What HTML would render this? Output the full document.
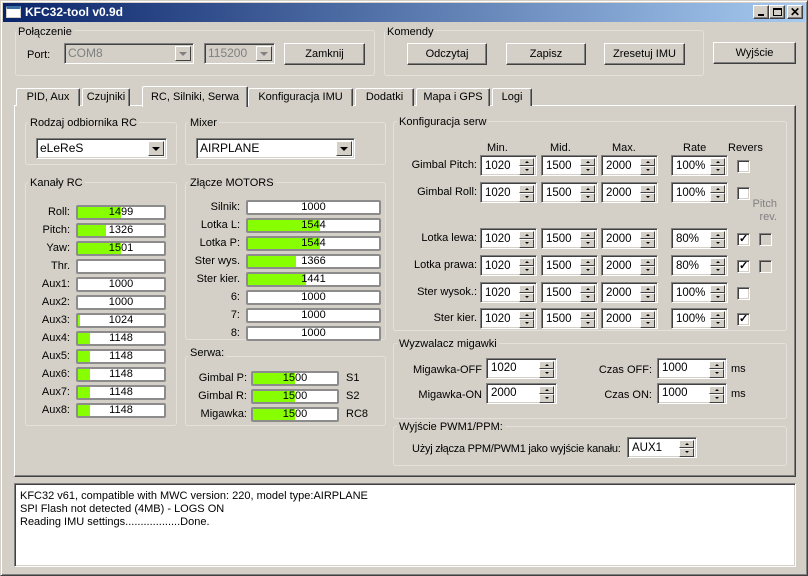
<!DOCTYPE html>
<html><head><meta charset="utf-8"><style>
*{box-sizing:border-box;margin:0;padding:0}
body{width:808px;height:576px;background:#d4d0c8;font:11px "Liberation Sans",sans-serif;color:#000;position:relative;overflow:hidden}
.a{position:absolute}
.win{left:0;top:0;width:808px;height:576px;border:1px solid;border-color:#d4d0c8 #404040 #404040 #d4d0c8;box-shadow:inset 1px 1px #fff,inset -1px -1px #808080}
.title{left:3px;top:3px;width:802px;height:19px;background:linear-gradient(90deg,#0a246a,#a6caf0);color:#fff;font-weight:bold;font-size:12px;line-height:19px;padding-left:22px}
.tb{top:5px;width:16px;height:14px;background:#d4d0c8;border:1px solid;border-color:#fff #404040 #404040 #fff;box-shadow:inset -1px -1px #808080}
.btn{background:#d4d0c8;border:1px solid;border-color:#fff #404040 #404040 #fff;box-shadow:inset -1px -1px #808080;text-align:center;line-height:20px;height:22px}
.sunk{background:#fff;border:1px solid;border-color:#808080 #fff #fff #808080;box-shadow:inset 1px 1px #404040,inset -1px -1px #d4d0c8}
.grp{border:1px solid #e4e1da;border-radius:3px}
.gl{background:#d4d0c8;padding:0 2px}
.tab{top:88px;height:18px;border:1px solid;border-bottom:none;border-color:#fff #404040 #404040 #fff;border-radius:2px 2px 0 0;text-align:center;line-height:16px;background:#d4d0c8;box-shadow:inset -1px 0 #808080}
.panel{left:14px;top:105px;width:782px;height:372px;border:1px solid;border-color:#fff #404040 #404040 #fff;box-shadow:inset -1px -1px #808080}
.bar{height:15px;border:2px solid #8c8c8c;border-radius:2px;background:#fff;text-align:center;line-height:11px;overflow:hidden}
.bar b{position:absolute;left:0;top:0;bottom:0;background:#88ff00;font-weight:normal}
.bar span{position:relative}
.lb{text-align:right;line-height:15px}
.sp{height:21px;padding-left:4px;line-height:20px;font-size:11.5px}
.u,.d{position:absolute;right:2px;width:15px;height:8px;background:#d4d0c8;border:1px solid;border-color:#fff #404040 #404040 #fff}
.u{top:2px}.d{top:10px;height:9px}
.u:after,.d:after{content:"";position:absolute;left:5px;top:2px;border:2px solid transparent}
.u:after{border-bottom-color:#000;top:0}
.d:after{border-top-color:#000;top:2px}
.cb{width:13px;height:13px}
.ck{font-size:11px;line-height:10px;padding-left:1px;font-weight:bold}
.combo{height:21px;padding-left:3px;line-height:19px;font-size:12px}
.dd{position:absolute;right:2px;top:2px;width:16px;height:15px;background:#d4d0c8;border:1px solid;border-color:#fff #404040 #404040 #fff}
.dd:after{content:"";position:absolute;left:3px;top:5px;border:4px solid transparent;border-top-color:#000;border-bottom:none}
.dis{color:#808080;background:#d4d0c8}
.dis .dd:after{border-top-color:#808080}
</style></head><body>
<div class="a win"></div>
<div class="a title">KFC32-tool v0.9d</div>
<div class="a" style="left:6px;top:6px;width:15px;height:12px;background:#fff;border:1px solid #d4d0c8;border-top:3px solid #3a6ea5"></div>
<div class="a tb" style="left:753px"><div class="a" style="left:4px;top:8px;width:6px;height:2px;background:#000"></div></div>
<div class="a tb" style="left:769px"><div class="a" style="left:3px;top:2px;width:9px;height:8px;border:1px solid #000;border-top-width:2px"></div></div>
<div class="a tb" style="left:787px;font:bold 12px 'Liberation Sans';line-height:12px;text-align:center">✕</div>

<div class="a grp" style="left:15px;top:30px;width:360px;height:46px"></div>
<div class="a gl" style="left:16px;top:26px">Połączenie</div>
<div class="a" style="left:27px;top:49px">Port:</div>
<div class="a sunk combo dis" style="left:64px;top:43px;width:130px">COM8<i class="dd"></i></div>
<div class="a sunk combo dis" style="left:204px;top:43px;width:71px">115200<i class="dd"></i></div>
<div class="a btn" style="left:284px;top:43px;width:81px">Zamknij</div>

<div class="a grp" style="left:384px;top:30px;width:320px;height:46px"></div>
<div class="a gl" style="left:385px;top:26px">Komendy</div>
<div class="a btn" style="left:407px;top:43px;width:80px">Odczytaj</div>
<div class="a btn" style="left:506px;top:43px;width:80px">Zapisz</div>
<div class="a btn" style="left:604px;top:43px;width:81px">Zresetuj IMU</div>
<div class="a btn" style="left:713px;top:42px;width:83px">Wyjście</div>

<div class="a panel"></div>
<div class="a tab" style="left:16px;width:64px">PID, Aux</div>
<div class="a tab" style="left:82px;width:48px">Czujniki</div>
<div class="a tab" style="left:248px;width:105px">Konfiguracja IMU</div>
<div class="a tab" style="left:355px;width:59px">Dodatki</div>
<div class="a tab" style="left:416px;width:74px">Mapa i GPS</div>
<div class="a tab" style="left:492px;width:40px">Logi</div>
<div class="a tab" style="left:142px;top:86px;width:106px;height:21px;line-height:20px">RC, Silniki, Serwa</div>

<div class="a grp" style="left:25px;top:122px;width:152px;height:43px"></div>
<div class="a gl" style="left:28px;top:117px">Rodzaj odbiornika RC</div>
<div class="a sunk combo" style="left:36px;top:138px;width:131px">eLeReS<i class="dd"></i></div>
<div class="a grp" style="left:185px;top:122px;width:201px;height:43px"></div>
<div class="a gl" style="left:188px;top:117px">Mixer</div>
<div class="a sunk combo" style="left:196px;top:138px;width:159px">AIRPLANE<i class="dd"></i></div>

<div class="a grp" style="left:25px;top:182px;width:152px;height:244px"></div>
<div class="a gl" style="left:28px;top:177px">Kanały RC</div>
<div class="a grp" style="left:185px;top:182px;width:201px;height:158px"></div>
<div class="a gl" style="left:188px;top:177px">Złącze MOTORS</div>
<div class="a grp" style="left:185px;top:356px;width:201px;height:70px"></div>
<div class="a gl" style="left:188px;top:347px">Serwa:</div>

<div class="a lb" style="left:20px;top:205px;width:50px">Roll:</div><div class="a bar" style="left:76px;top:205px;width:90px"><b style="width:43px"></b><span>1499</span></div>
<div class="a lb" style="left:20px;top:223px;width:50px">Pitch:</div><div class="a bar" style="left:76px;top:223px;width:90px"><b style="width:28px"></b><span>1326</span></div>
<div class="a lb" style="left:20px;top:241px;width:50px">Yaw:</div><div class="a bar" style="left:76px;top:241px;width:90px"><b style="width:43px"></b><span>1501</span></div>
<div class="a lb" style="left:20px;top:259px;width:50px">Thr.</div><div class="a bar" style="left:76px;top:259px;width:90px"></div>
<div class="a lb" style="left:20px;top:277px;width:50px">Aux1:</div><div class="a bar" style="left:76px;top:277px;width:90px"><span>1000</span></div>
<div class="a lb" style="left:20px;top:295px;width:50px">Aux2:</div><div class="a bar" style="left:76px;top:295px;width:90px"><span>1000</span></div>
<div class="a lb" style="left:20px;top:313px;width:50px">Aux3:</div><div class="a bar" style="left:76px;top:313px;width:90px"><b style="width:2px"></b><span>1024</span></div>
<div class="a lb" style="left:20px;top:331px;width:50px">Aux4:</div><div class="a bar" style="left:76px;top:331px;width:90px"><b style="width:12px"></b><span>1148</span></div>
<div class="a lb" style="left:20px;top:349px;width:50px">Aux5:</div><div class="a bar" style="left:76px;top:349px;width:90px"><b style="width:12px"></b><span>1148</span></div>
<div class="a lb" style="left:20px;top:367px;width:50px">Aux6:</div><div class="a bar" style="left:76px;top:367px;width:90px"><b style="width:12px"></b><span>1148</span></div>
<div class="a lb" style="left:20px;top:385px;width:50px">Aux7:</div><div class="a bar" style="left:76px;top:385px;width:90px"><b style="width:12px"></b><span>1148</span></div>
<div class="a lb" style="left:20px;top:403px;width:50px">Aux8:</div><div class="a bar" style="left:76px;top:403px;width:90px"><b style="width:12px"></b><span>1148</span></div>

<div class="a lb" style="left:180px;top:200px;width:60px">Silnik:</div><div class="a bar" style="left:246px;top:200px;width:135px"><span>1000</span></div>
<div class="a lb" style="left:180px;top:218px;width:60px">Lotka L:</div><div class="a bar" style="left:246px;top:218px;width:135px"><b style="width:72px"></b><span>1544</span></div>
<div class="a lb" style="left:180px;top:236px;width:60px">Lotka P:</div><div class="a bar" style="left:246px;top:236px;width:135px"><b style="width:72px"></b><span>1544</span></div>
<div class="a lb" style="left:180px;top:254px;width:60px">Ster wys.</div><div class="a bar" style="left:246px;top:254px;width:135px"><b style="width:48px"></b><span>1366</span></div>
<div class="a lb" style="left:180px;top:272px;width:60px">Ster kier.</div><div class="a bar" style="left:246px;top:272px;width:135px"><b style="width:58px"></b><span>1441</span></div>
<div class="a lb" style="left:180px;top:290px;width:60px">6:</div><div class="a bar" style="left:246px;top:290px;width:135px"><span>1000</span></div>
<div class="a lb" style="left:180px;top:308px;width:60px">7:</div><div class="a bar" style="left:246px;top:308px;width:135px"><span>1000</span></div>
<div class="a lb" style="left:180px;top:326px;width:60px">8:</div><div class="a bar" style="left:246px;top:326px;width:135px"><span>1000</span></div>

<div class="a lb" style="left:185px;top:371px;width:62px">Gimbal P:</div><div class="a bar" style="left:251px;top:371px;width:88px"><b style="width:42px"></b><span>1500</span></div><div class="a" style="left:346px;top:372px">S1</div>
<div class="a lb" style="left:185px;top:389px;width:62px">Gimbal R:</div><div class="a bar" style="left:251px;top:389px;width:88px"><b style="width:42px"></b><span>1500</span></div><div class="a" style="left:346px;top:390px">S2</div>
<div class="a lb" style="left:185px;top:407px;width:62px">Migawka:</div><div class="a bar" style="left:251px;top:407px;width:88px"><b style="width:42px"></b><span>1500</span></div><div class="a" style="left:346px;top:408px">RC8</div>

<div class="a grp" style="left:393px;top:121px;width:394px;height:210px"></div>
<div class="a gl" style="left:397px;top:116px">Konfiguracja serw</div>
<div class="a" style="left:487px;top:142px">Min.</div>
<div class="a" style="left:550px;top:142px">Mid.</div>
<div class="a" style="left:612px;top:142px">Max.</div>
<div class="a" style="left:683px;top:142px">Rate</div>
<div class="a" style="left:728px;top:142px">Revers</div>
<div class="a" style="left:752px;top:198px;color:#808080;text-align:right;width:25px;line-height:13px">Pitch<br>rev.</div>

<div class="a lb" style="left:395px;top:158px;width:82px">Gimbal Pitch:</div>
<div class="a lb" style="left:395px;top:185px;width:82px">Gimbal Roll:</div>
<div class="a lb" style="left:395px;top:231px;width:82px">Lotka lewa:</div>
<div class="a lb" style="left:395px;top:258px;width:82px">Lotka prawa:</div>
<div class="a lb" style="left:395px;top:285px;width:82px">Ster wysok.:</div>
<div class="a lb" style="left:395px;top:311px;width:82px">Ster kier.</div>

<div class="a sunk sp" style="left:480px;top:155px;width:57px">1020<i class="u"></i><i class="d"></i></div>
<div class="a sunk sp" style="left:541px;top:155px;width:57px">1500<i class="u"></i><i class="d"></i></div>
<div class="a sunk sp" style="left:601px;top:155px;width:57px">2000<i class="u"></i><i class="d"></i></div>
<div class="a sunk sp" style="left:671px;top:155px;width:57px">100%<i class="u"></i><i class="d"></i></div>
<div class="a sunk cb" style="left:737px;top:160px"></div>

<div class="a sunk sp" style="left:480px;top:182px;width:57px">1020<i class="u"></i><i class="d"></i></div>
<div class="a sunk sp" style="left:541px;top:182px;width:57px">1500<i class="u"></i><i class="d"></i></div>
<div class="a sunk sp" style="left:601px;top:182px;width:57px">2000<i class="u"></i><i class="d"></i></div>
<div class="a sunk sp" style="left:671px;top:182px;width:57px">100%<i class="u"></i><i class="d"></i></div>
<div class="a sunk cb" style="left:737px;top:187px"></div>

<div class="a sunk sp" style="left:480px;top:228px;width:57px">1020<i class="u"></i><i class="d"></i></div>
<div class="a sunk sp" style="left:541px;top:228px;width:57px">1500<i class="u"></i><i class="d"></i></div>
<div class="a sunk sp" style="left:601px;top:228px;width:57px">2000<i class="u"></i><i class="d"></i></div>
<div class="a sunk sp" style="left:671px;top:228px;width:57px">80%<i class="u"></i><i class="d"></i></div>
<div class="a sunk cb ck" style="left:737px;top:233px">✓</div>
<div class="a sunk cb" style="left:759px;top:233px;background:#d4d0c8"></div>

<div class="a sunk sp" style="left:480px;top:255px;width:57px">1020<i class="u"></i><i class="d"></i></div>
<div class="a sunk sp" style="left:541px;top:255px;width:57px">1500<i class="u"></i><i class="d"></i></div>
<div class="a sunk sp" style="left:601px;top:255px;width:57px">2000<i class="u"></i><i class="d"></i></div>
<div class="a sunk sp" style="left:671px;top:255px;width:57px">80%<i class="u"></i><i class="d"></i></div>
<div class="a sunk cb ck" style="left:737px;top:260px">✓</div>
<div class="a sunk cb" style="left:759px;top:260px;background:#d4d0c8"></div>

<div class="a sunk sp" style="left:480px;top:282px;width:57px">1020<i class="u"></i><i class="d"></i></div>
<div class="a sunk sp" style="left:541px;top:282px;width:57px">1500<i class="u"></i><i class="d"></i></div>
<div class="a sunk sp" style="left:601px;top:282px;width:57px">2000<i class="u"></i><i class="d"></i></div>
<div class="a sunk sp" style="left:671px;top:282px;width:57px">100%<i class="u"></i><i class="d"></i></div>
<div class="a sunk cb" style="left:737px;top:287px"></div>

<div class="a sunk sp" style="left:480px;top:308px;width:57px">1020<i class="u"></i><i class="d"></i></div>
<div class="a sunk sp" style="left:541px;top:308px;width:57px">1500<i class="u"></i><i class="d"></i></div>
<div class="a sunk sp" style="left:601px;top:308px;width:57px">2000<i class="u"></i><i class="d"></i></div>
<div class="a sunk sp" style="left:671px;top:308px;width:57px">100%<i class="u"></i><i class="d"></i></div>
<div class="a sunk cb ck" style="left:737px;top:313px">✓</div>

<div class="a grp" style="left:393px;top:343px;width:394px;height:76px"></div>
<div class="a gl" style="left:397px;top:338px">Wyzwalacz migawki</div>
<div class="a lb" style="left:400px;top:363px;width:82px">Migawka-OFF</div>
<div class="a lb" style="left:400px;top:388px;width:82px">Migawka-ON</div>
<div class="a sunk sp" style="left:486px;top:358px;width:71px;line-height:18px">1020<i class="u"></i><i class="d"></i></div>
<div class="a sunk sp" style="left:486px;top:383px;width:71px;line-height:18px">2000<i class="u"></i><i class="d"></i></div>
<div class="a lb" style="left:580px;top:363px;width:72px">Czas OFF:</div>
<div class="a lb" style="left:580px;top:388px;width:72px">Czas ON:</div>
<div class="a sunk sp" style="left:657px;top:358px;width:70px;line-height:18px">1000<i class="u"></i><i class="d"></i></div>
<div class="a sunk sp" style="left:657px;top:383px;width:70px;line-height:18px">1000<i class="u"></i><i class="d"></i></div>
<div class="a" style="left:731px;top:363px">ms</div>
<div class="a" style="left:731px;top:388px">ms</div>

<div class="a grp" style="left:393px;top:426px;width:394px;height:40px"></div>
<div class="a gl" style="left:397px;top:421px">Wyjście PWM1/PPM:</div>
<div class="a" style="left:412px;top:443px;letter-spacing:-0.25px">Użyj złącza PPM/PWM1 jako wyjście kanału:</div>
<div class="a sunk sp" style="left:627px;top:437px;width:70px">AUX1<i class="u"></i><i class="d"></i></div>

<div class="a sunk" style="left:14px;top:483px;width:782px;height:84px;padding:6px 0 0 5px;line-height:13px;font-size:11px">KFC32 v61, compatible with MWC version: 220, model type:AIRPLANE<br>SPI Flash not detected (4MB) - LOGS ON<br>Reading IMU settings..................Done.</div>
</body></html>
